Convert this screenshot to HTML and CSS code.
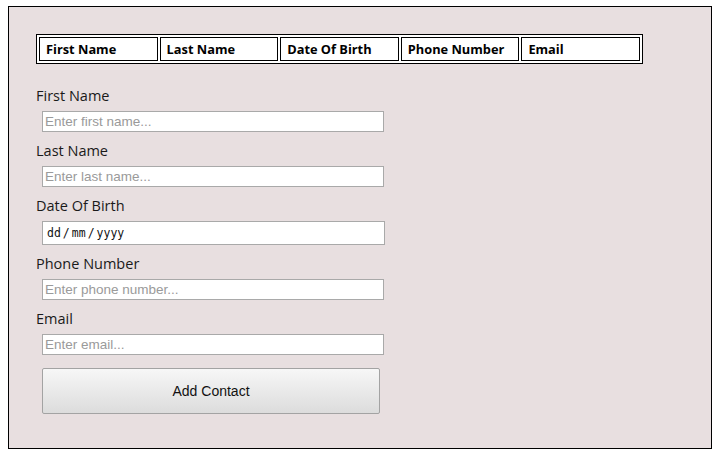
FILE: index.html
```html
<!DOCTYPE html>
<html>
<head>
<meta charset="utf-8">
<link rel="stylesheet" href="styles.css">
</head>
<body>
<div class="box">
  <table class="contacts">
    <tr>
      <td>First Name</td>
      <td>Last Name</td>
      <td>Date Of Birth</td>
      <td>Phone Number</td>
      <td>Email</td>
    </tr>
  </table>
  <form class="form">
    <label class="lbl">First Name</label>
    <input class="field" type="text" placeholder="Enter first name...">
    <label class="lbl">Last Name</label>
    <input class="field" type="text" placeholder="Enter last name...">
    <label class="lbl">Date Of Birth</label>
    <div class="date"><span>dd</span><span class="sl">/</span><span>mm</span><span class="sl">/</span><span>yyyy</span></div>
    <label class="lbl">Phone Number</label>
    <input class="field" type="text" placeholder="Enter phone number...">
    <label class="lbl">Email</label>
    <input class="field" type="text" placeholder="Enter email...">
    <button class="btn" type="button">Add Contact</button>
  </form>
</div>
</body>
</html>
```

FILE: styles.css
```css
html, body {
  margin: 0;
  padding: 0;
  background: #ffffff;
}
.box {
  margin: 6px 0 0 8px;
  width: 702px;
  height: 441px;
  box-sizing: content-box;
  border: 1px solid #000;
  background: #e8dfe0;
  padding: 0;
}
.contacts {
  margin: 27px 0 0 27px;
  width: 607px;
  table-layout: fixed;
  border: 1px solid #000;
  border-spacing: 2px;
  background: #fff;
  font-family: "Open Sans", sans-serif;
  font-weight: bold;
  font-size: 12.8px;
  color: #000;
}
.contacts td {
  border: 1px solid #000;
  padding: 0 6px;
  height: 22px;
  line-height: 20px;
  white-space: nowrap;
}
.form {
  display: flex;
  flex-direction: column;
  align-items: flex-start;
  margin: 22px 0 0 27px;
}
.lbl {
  font-family: "Open Sans", sans-serif;
  font-size: 14.5px;
  line-height: 20px;
  color: #1a1a1a;
  margin: 0 0 5px 0;
}
.field + .lbl, .date + .lbl {
  margin-top: 9px;
}
.field {
  margin: 0 0 0 6px;
  width: 342px;
  height: 21px;
  box-sizing: border-box;
  border: 1px solid #a9a9a9;
  padding: 0 2px;
  font-family: "Liberation Sans", Arial, sans-serif;
  font-size: 13.5px;
  background: #fff;
  outline: none;
}
.field::placeholder {
  color: #9a9a9a;
}
.date {
  margin-left: 6px;
  width: 343px;
  height: 24px;
  box-sizing: border-box;
  border: 1px solid #a9a9a9;
  background: #fff;
  padding: 0 0 0 4px;
  display: flex;
  align-items: center;
  font-family: "DejaVu Sans Mono", monospace;
  font-size: 11.5px;
  color: #111;
}
.date .sl {
  margin: 0 2px;
}
.btn {
  margin: 13px 0 0 6px;
  width: 338px;
  height: 46px;
  box-sizing: border-box;
  border: 1px solid #a3a3a3;
  border-radius: 2px;
  background: linear-gradient(#f7f7f7, #dcdcdc);
  font-family: "Liberation Sans", Arial, sans-serif;
  font-size: 14px;
  color: #111;
  padding: 0;
}
```
